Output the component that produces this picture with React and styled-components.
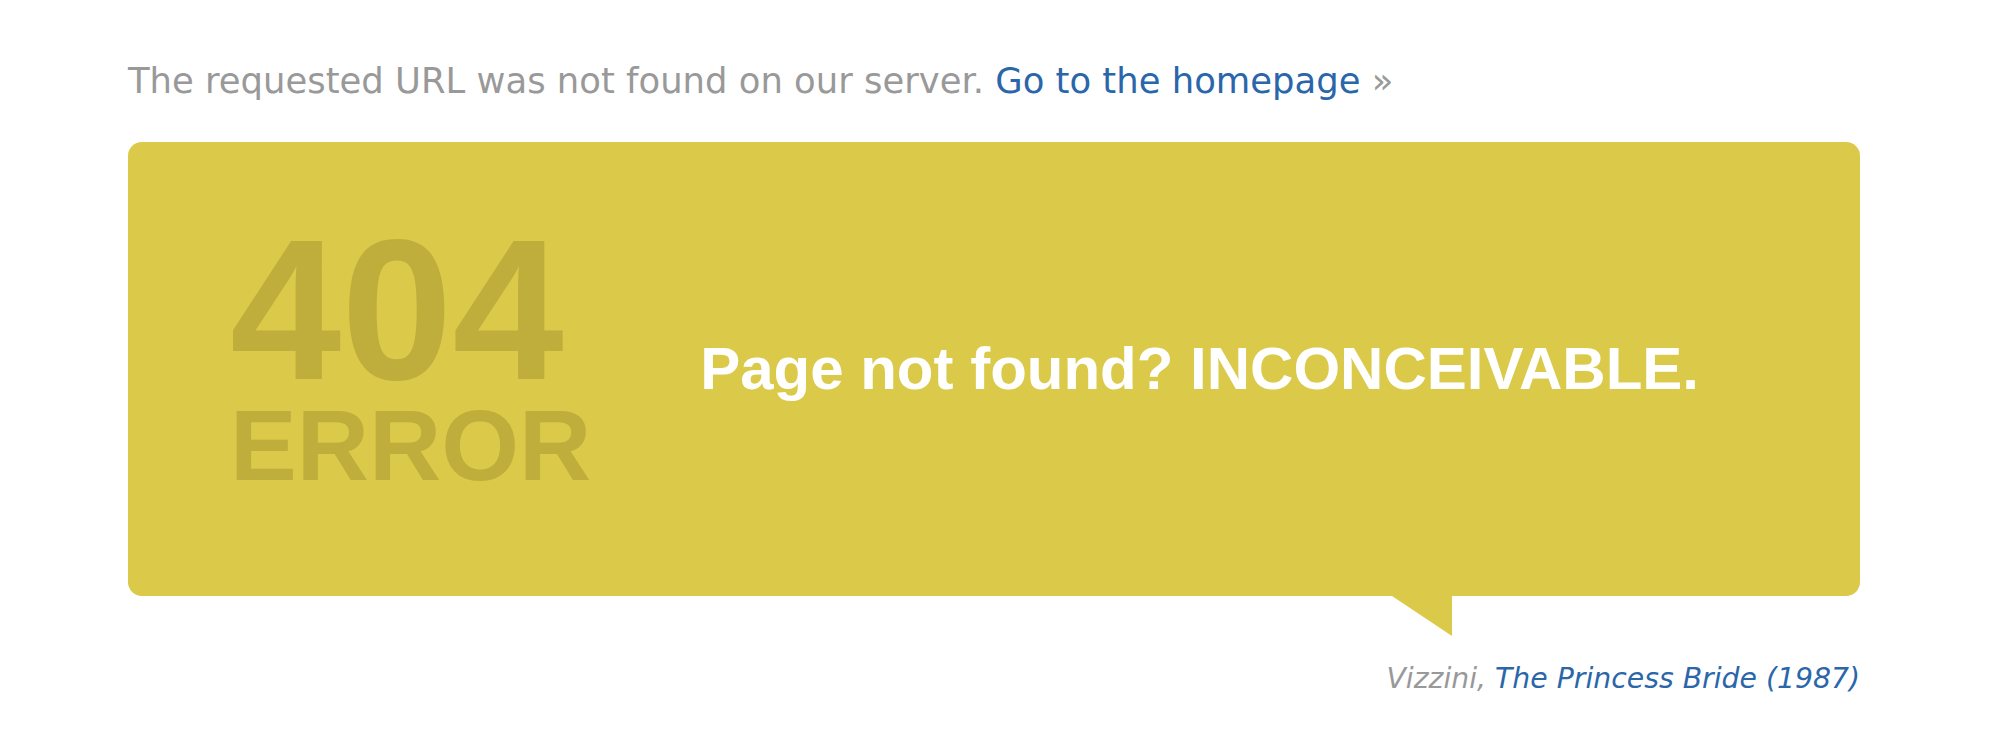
import React from 'react';
import styled, { createGlobalStyle } from 'styled-components';

const GlobalStyle = createGlobalStyle`
  body {
    margin: 0;
    background: #fff;
    font-family: "DejaVu Sans", Verdana, sans-serif;
  }
`;

const Page = styled.div`
  width: 1732px;
  margin-left: 128px;
  padding-top: 56px;
`;

const Intro = styled.p`
  margin: 0 0 36px;
  font-size: 35.4px;
  line-height: 1.4;
  color: #999;
`;

const Link = styled.a`
  color: #2a66a9;
  text-decoration: none;
`;

const Bubble = styled.div`
  position: relative;
  display: flex;
  align-items: center;
  min-height: 454px;
  box-sizing: border-box;
  padding-left: 102px;
  background: #dbc949;
  border-radius: 14px;

  &::after {
    content: '';
    position: absolute;
    top: 100%;
    left: 1264px;
    width: 0;
    height: 0;
    border-left: 60px solid transparent;
    border-top: 40px solid #dbc949;
  }
`;

const ErrorCode = styled.div`
  display: flex;
  flex-direction: column;
  margin-bottom: 18px;
  font-family: "Liberation Sans", Arial, sans-serif;
  font-weight: bold;
  color: #bfae3b;
`;

const Digits = styled.span`
  font-size: 200px;
  line-height: 170px;
`;

const Label = styled.span`
  font-size: 100px;
  line-height: 100px;
`;

const Headline = styled.h1`
  margin: 0 0 0 109px;
  font-family: "Liberation Sans", Arial, sans-serif;
  font-weight: bold;
  font-size: 60px;
  line-height: 1.2;
  color: #fff;
`;

const Quote = styled.p`
  margin: 63px 0 0;
  text-align: right;
  font-size: 28.3px;
  line-height: 1.4;
  font-style: italic;
  color: #999;
`;

export default function App() {
  return (
    <>
      <GlobalStyle />
      <Page>
        <Intro>
          The requested URL was not found on our server.{' '}
          <Link href="#">Go to the homepage</Link> &raquo;
        </Intro>
        <Bubble>
          <ErrorCode>
            <Digits>404</Digits>
            <Label>ERROR</Label>
          </ErrorCode>
          <Headline>Page not found? INCONCEIVABLE.</Headline>
        </Bubble>
        <Quote>
          Vizzini, <Link href="#">The Princess Bride (1987)</Link>
        </Quote>
      </Page>
    </>
  );
}
